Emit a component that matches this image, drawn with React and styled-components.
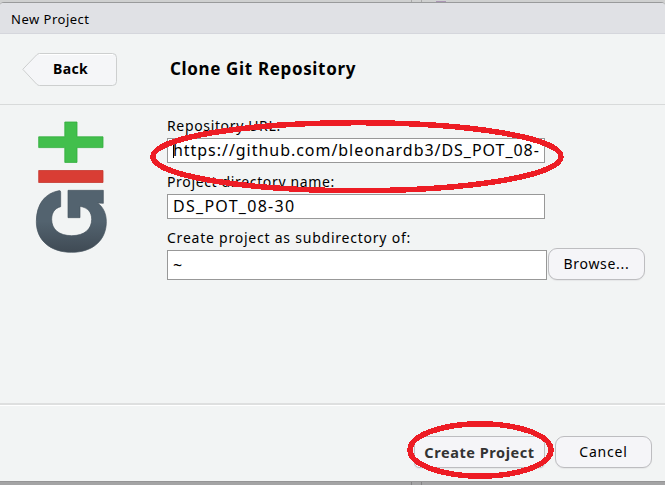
import React from "react";
import styled, { createGlobalStyle } from "styled-components";

const GlobalStyle = createGlobalStyle`
  * { box-sizing: border-box; }
  body { margin: 0; background: #a6a6a7; overflow: hidden; }
`;

const Backdrop = styled.div`
  width: 665px;
  height: 485px;
  padding-top: 2px;
  background: linear-gradient(#cfd0d0 0 20px, #a4a4a5 20px);
  font-family: "Noto Sans", "Open Sans", sans-serif;
  color: #000;
  position: relative;
`;

const Dialog = styled.section`
  display: flex;
  flex-direction: column;
  height: 480px;
  border-top: 1px solid #999a9b;
  border-bottom: 1px solid #959596;
  border-radius: 4px 4px 0 0;
  background: #f2f4f4;
  overflow: hidden;
`;

const Text = styled.span`
  display: block;
  white-space: pre;
  font-size: ${(p) => p.$size || 14}px;
  font-weight: ${(p) => (p.$bold ? 700 : 400)};
  letter-spacing: ${(p) => p.$spacing || 0}px;
  line-height: 20px;
`;

const TitleBar = styled.header`
  height: 31px;
  flex: none;
  padding: 6px 11px 0;
  background: #e0e1e5;
  border-bottom: 1px solid #d5d6dc;
`;

const WizardHeader = styled.div`
  display: flex;
  height: 71px;
  flex: none;
  padding: 17px 0 0 22px;
  border-bottom: 1px solid #d8dada;
`;

const BackButton = styled.button`
  position: relative;
  width: 95px;
  height: 36px;
  padding: 0 0 1px 31px;
  border: 0;
  background: none;
  text-align: left;
  font-family: inherit;
  color: inherit;
`;

const BackShape = styled.svg`
  position: absolute;
  left: 0;
  top: 0;
`;

const BackLabel = styled(Text)`
  position: relative;
`;

const Heading = styled.h1`
  margin: 8px 0 0 53px;
`;

const Body = styled.main`
  display: flex;
  flex: 1;
  padding: 11px 0 0 35px;
`;

const Logo = styled.svg`
  width: 74px;
  height: 140px;
  flex: none;
  margin-right: 58px;
`;

const Form = styled.form`
  width: 479px;
`;

const Field = styled.div`
  height: 56px;
`;

const FieldLabel = styled(Text)`
  height: 22px;
`;

const TextBox = styled.div`
  display: flex;
  align-items: center;
  width: ${(p) => p.$width || 378}px;
  height: ${(p) => p.$height || 25}px;
  padding-left: 5px;
  padding-right: 2px;
  padding-bottom: ${(p) => (p.$height ? 0 : 2)}px;
  overflow: hidden;
  background: #fff;
  border: 1px solid #989898;
`;

const Value = styled(Text)`
  overflow: hidden;
`;

const Caret = styled.i`
  width: 1px;
  height: 17px;
  margin-right: -1px;
  flex: none;
  background: #000;
`;

const BrowseRow = styled.div`
  display: flex;
  gap: 1px;
  align-items: flex-start;
`;

const Button = styled.button`
  display: flex;
  justify-content: center;
  align-items: center;
  width: ${(p) => p.$width}px;
  height: 32px;
  padding: 0;
  border: 1px solid #bdbdc0;
  border-radius: ${(p) => p.$radius || 9}px;
  background: #f5f5f8;
  box-shadow: 0 1px 1px #e6e7e8;
  font-family: inherit;
  color: ${(p) => p.$color || "#000"};
`;

const BrowseButton = styled(Button)`
  margin-top: -2px;
`;

const Footer = styled.footer`
  display: flex;
  justify-content: flex-end;
  gap: 10px;
  height: 78px;
  flex: none;
  padding: 31px 13px 0;
  border-top: 2px solid #dedfdf;
  box-shadow: inset 0 1px #fff;
`;

const Annotations = styled.svg`
  position: absolute;
  inset: 0;
  pointer-events: none;
`;

function GitLogo() {
  return (
    <Logo viewBox="35 116 74 140">
      <defs>
        <linearGradient id="slate" x1="0" y1="0" x2="0" y2="1">
          <stop offset="0" stopColor="#53636f" />
          <stop offset="0.5" stopColor="#53636f" />
          <stop offset="1" stopColor="#3f4a54" />
        </linearGradient>
      </defs>
      <path d="M64.8 122h12.2v14.8h26v10.8h-26v14.8H64.8v-14.8H38.7v-10.8h26.1z" fill="#42bf4c" stroke="#32ad3e" strokeWidth=".8" />
      <path d="M38.7 170.5H103v12H38.7z" fill="#d93d34" stroke="#c5372f" strokeWidth=".8" />
      <g transform="translate(20 110) scale(.33333)">
        <path
          d="M117 242Q122 241 122 247V290C104 295 95 308 95 328C95 358 117 377 155 377C193 377 215 358 215 328C215 307 204 293 180 289V323H144V241H250V280L233 279C250 292 259 311 259 335C259 391 218 427 155 427C91 427 49 391 49 335C49 283 74 250 117 242Z"
          fill="url(#slate)" stroke="#46535e" strokeWidth="2"
        />
      </g>
    </Logo>
  );
}

export default function App() {
  return (
    <>
      <GlobalStyle />
      <Backdrop>
        <Dialog>
          <TitleBar>
            <Text $size={13} $spacing={0.5}>New Project</Text>
          </TitleBar>
          <WizardHeader>
            <BackButton>
              <BackShape width="95" height="36">
                <path d="M17.5 2.5H90.5Q94.5 2.5 94.5 6.5V30.5Q94.5 34.5 90.5 34.5H17.5Q16 34.5 14.5 33L.8 18.3 14.5 4Q16 2.5 17.5 2.5Z" fill="#f5f6f8" stroke="#cdcfcf" />
                <path d="M17 3.5H91" stroke="#fff" />
              </BackShape>
              <BackLabel $bold $size={14} $spacing={0.4}>Back</BackLabel>
            </BackButton>
            <Heading>
              <Text $bold $size={17} $spacing={0.65}>Clone Git Repository</Text>
            </Heading>
          </WizardHeader>
          <Body>
            <GitLogo />
            <Form>
              <Field>
                <FieldLabel $spacing={0.65}>Repository URL:</FieldLabel>
                <TextBox>
                  <Caret />
                  <Value $size={16} $spacing={0.96}>https://github.com/bleonardb3/DS_POT_08-</Value>
                </TextBox>
              </Field>
              <Field>
                <FieldLabel $spacing={0.65}>Project directory name:</FieldLabel>
                <TextBox>
                  <Value $size={16} $spacing={1.28}>DS_POT_08-30</Value>
                </TextBox>
              </Field>
              <Field>
                <FieldLabel $spacing={0.77}>Create project as subdirectory of:</FieldLabel>
                <BrowseRow>
                  <TextBox $width={380} $height={30}>
                    <Value $size={16}>~</Value>
                  </TextBox>
                  <BrowseButton type="button" $width={97}>
                    <Text $spacing={0.7}>Browse...</Text>
                  </BrowseButton>
                </BrowseRow>
              </Field>
            </Form>
          </Body>
          <Footer>
            <Button $width={131} $radius={5} $color="#333">
              <Text $bold $size={14.5} $spacing={0.55}>Create Project</Text>
            </Button>
            <Button $width={97}>
              <Text $spacing={0.8}>Cancel</Text>
            </Button>
          </Footer>
        </Dialog>
        <Annotations width="665" height="485" fill="none" stroke="#ed1c24" strokeWidth="5.5" shapeRendering="crispEdges">
          <path d="M411.5 0v2M421.5 0v2" stroke="#aaa" strokeWidth="1" />
          <path d="M436 1.5h10" stroke="#ab96b5" strokeWidth="1" />
          <path d="M411.5 482v3M421.5 482v3" stroke="#858586" strokeWidth="1" />
          <ellipse cx="357" cy="156.7" rx="204" ry="34" />
          <ellipse cx="480.5" cy="450" rx="70.5" ry="26.2" />
        </Annotations>
      </Backdrop>
    </>
  );
}
